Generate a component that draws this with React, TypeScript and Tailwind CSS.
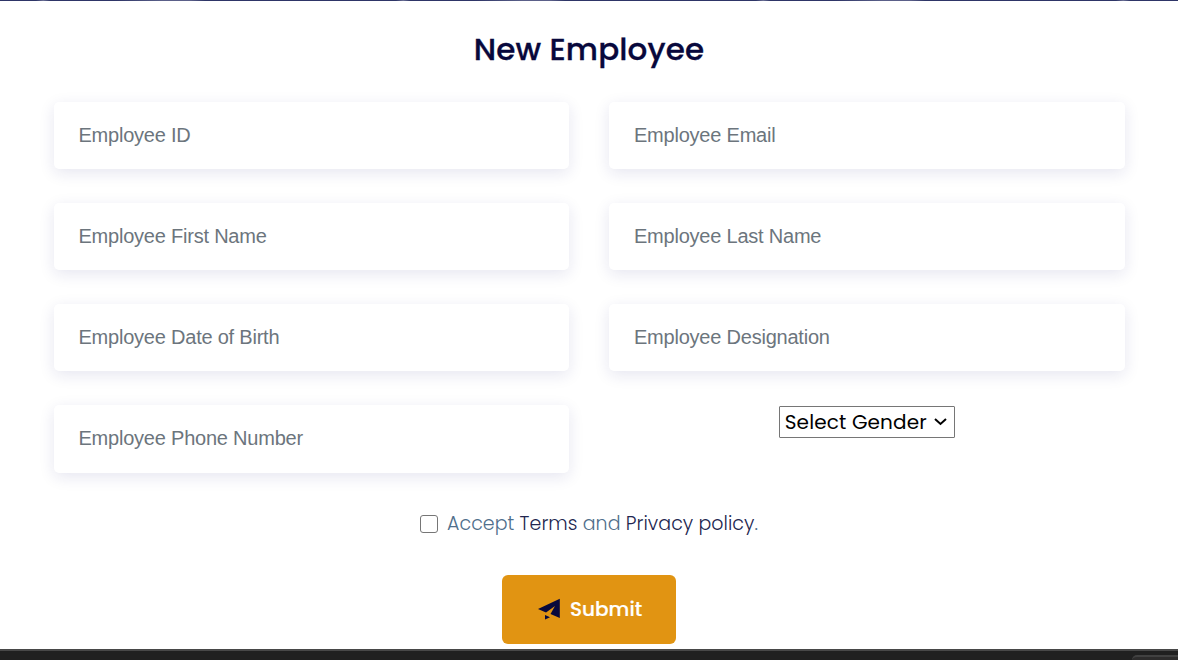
import type { ReactNode } from "react";

function Field({ label }: { label: string }) {
  return (
    <input
      type="text"
      placeholder={label}
      className="block h-[67.5px] w-full rounded-[5px] bg-white px-[25px] font-['Liberation_Sans',Arial,sans-serif] text-[20px] tracking-[-0.22px] text-[#6c757d] shadow-[0_4px_16px_rgba(30,25,120,0.11)] outline-none placeholder:text-[#6c757d] placeholder:opacity-100"
    />
  );
}

function Link({ children }: { children: ReactNode }) {
  return <a href="#" className="text-[#22264f]">{children}</a>;
}

export default function App() {
  return (
    <div className="flex h-[660px] w-full flex-col overflow-hidden bg-white font-['Poppins','Inter',sans-serif]">
      <div className="h-px shrink-0 bg-[linear-gradient(90deg,#2e3567_0%,#2e3567_10%,#6b7095_12%,#2e3567_14%,#2e3567_32%,#5b6089_45%,#5b6089_53%,#2e3567_57%,#2e3567_100%)] bg-[length:360px_1px]" />
      <h1 className="mt-[28px] text-center text-[31px] leading-[40px] font-medium tracking-[0.13px] text-[#08083c] [-webkit-text-stroke:0.3px_#08083c]">New Employee</h1>
      <form className="flex flex-col" onSubmit={(e) => e.preventDefault()}>
        <div className="mx-[53.5px] mt-[32.6px] grid grid-cols-2 gap-x-[40px] gap-y-[33.7px]">
          <Field label="Employee ID" />
          <Field label="Employee Email" />
          <Field label="Employee First Name" />
          <Field label="Employee Last Name" />
          <Field label="Employee Date of Birth" />
          <Field label="Employee Designation" />
          <Field label="Employee Phone Number" />
          <div className="flex justify-center pt-[0.8px]">
            <button type="button" className="flex h-[32px] w-[176px] items-center justify-between rounded-[1px] border border-[#767676] pr-[7px] pl-[5px] text-[20px] font-normal tracking-[0.13px] whitespace-nowrap text-black">
              <span>Select Gender</span>
              <svg width="13" height="8" viewBox="0 0 13 8" fill="none" stroke="currentColor" strokeWidth="2">
                <path d="M1 1l5.5 5L12 1" />
              </svg>
            </button>
          </div>
        </div>
        <label className="mt-[35.9px] flex h-[30px] items-center justify-center text-[19px] font-light tracking-[0.04px] text-[#506f8c]">
          <input type="checkbox" className="mr-[9px] h-[18px] w-[18px] appearance-none rounded-[3px] border-[1.5px] border-[#767676] bg-white" />
          <span className="pt-[1px] whitespace-pre">Accept <Link>Terms</Link> and <Link>Privacy policy</Link>.</span>
        </label>
        <button type="submit" className="mx-auto mt-[36px] flex h-[69px] w-[174px] items-center rounded-[6px] bg-[#e19412] pl-[36px] text-[20px] font-medium text-white [-webkit-text-stroke:0.2px_white]">
          <svg width="22" height="22" viewBox="0 0 22 22" fill="#08083c">
            <path d="M0 11L21.8 0.8v19.3L12.5 16 17 8 8 14.6z" />
            <path d="M7 17l5 2.2-5 2.4z" />
          </svg>
          <span className="ml-[10px]">Submit</span>
        </button>
      </form>
      <footer className="mt-auto flex h-[11px] shrink-0 justify-end border-t-2 border-[#484848] bg-[#202020] pt-[4px]">
        <div className="h-[5px] w-[46px] rounded-tl-[5px] border-t-2 border-[#414141] bg-[#2d2c2c]" />
      </footer>
    </div>
  );
}
